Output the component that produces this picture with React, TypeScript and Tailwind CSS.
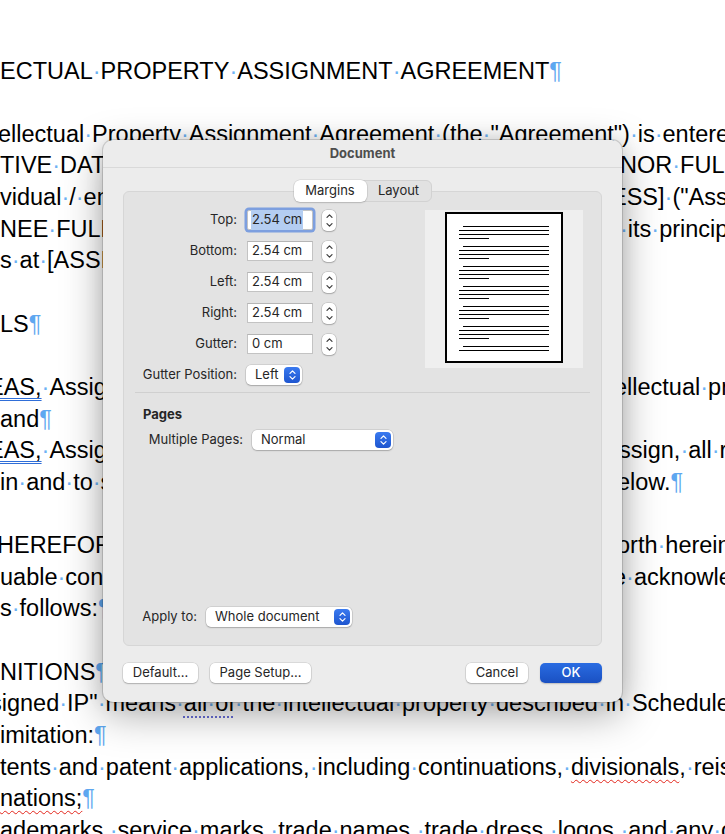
import React from "react";

// Document body: blue dots mark spaces, blue pilcrows mark paragraph ends
const Marked = ({ s }: { s: string }) => (
  <>
    {s.split(/( |¶)/).map((p, i) =>
      p === " " ? (
        <span key={i} className="text-[#6db2f4]">
          ·
        </span>
      ) : p === "¶" ? (
        <span key={i} className="text-[#5ea7f0]">
          ¶
        </span>
      ) : (
        p
      )
    )}
  </>
);

const m = (s: string) => <Marked s={s} />;

interface DocLine {
  left?: React.ReactNode;
  right?: React.ReactNode;
  lx?: string;
  rx?: string;
}

const lines: DocLine[] = [
  { left: m("ECTUAL PROPERTY ASSIGNMENT AGREEMENT¶") },
  {},
  {
    left: m('ellectual Property Assignment Agreement (the "Agreement") is entered into'),
    lx: "-ml-[2px]",
  },
  { left: m("TIVE DATE] by and between [ASSIGNOR FULL NAME], an"), right: m("NOR FULL NAME]"), rx: "-ml-[2px]" },
  { left: m("vidual / entity with an address at [ASSIGNOR ADDRESS]"), right: m('ESS] ("Assignor")'), rx: "-ml-[11px]" },
  { left: m("NEE FULL NAME], a company organized under the laws"), right: m(" its principal"), rx: "-ml-[2px]" },
  { left: m("s at [ASSIGNEE ADDRESS] (\"Assignee\").¶") },
  {},
  { left: m("LS¶") },
  {},
  {
    left: (
      <>
        <span className="underline decoration-double decoration-[#2f6ed8] decoration-1 underline-offset-[3px]">EAS,</span>
        {m(" Assignor is the owner of certain intellectual property;")}
      </>
    ),
    lx: "-ml-[12px]",
    right: m("ellectual property"),
    rx: "-ml-[8px]",
  },
  { left: m("and¶") },
  {
    left: (
      <>
        <span className="underline decoration-double decoration-[#2f6ed8] decoration-1 underline-offset-[3px]">EAS,</span>
        {m(" Assignor wishes to assign, and Assignee wishes to")}
      </>
    ),
    lx: "-ml-[12px]",
    right: m("ssign, all right"),
    rx: "-ml-[3px]",
  },
  { left: m("in and to such intellectual property as set forth below."), right: m("elow.¶"), rx: "-ml-[5px]" },
  {},
  {
    left: m("HEREFORE, in consideration of the mutual covenants set"),
    lx: "-ml-[3px]",
    right: m("orth herein and"),
    rx: "-ml-[5px]",
  },
  { left: m("uable consideration, the receipt of which is hereby"), right: m("e acknowledged"), rx: "-ml-[9px]" },
  { left: m("s follows:¶") },
  {},
  { left: m("NITIONS¶") },
  {
    left: (
      <>
        {m('signed IP" means ')}
        <span className="underline decoration-dotted decoration-[#6a70d8] decoration-2 underline-offset-[5px]">
          {m("all of")}
        </span>
        {m(" the intellectual property described in Schedule A")}
      </>
    ),
    lx: "-ml-[10px]",
  },
  { left: m("imitation:¶") },
  {
    left: (
      <>
        {m("tents and patent applications, including continuations, ")}
        <span className="underline decoration-wavy decoration-[#e3261c] decoration-1 underline-offset-[4px]">divisionals</span>
        {m(", reissues")}
      </>
    ),
  },
  {
    left: (
      <>
        <span className="underline decoration-wavy decoration-[#e3261c] decoration-1 underline-offset-[4px]">nations;</span>
        {m("¶")}
      </>
    ),
  },
  { left: m("ademarks, service marks, trade names, trade dress, logos, and any other") },
];

const Chevron = ({ up, color }: { up?: boolean; color: string }) => (
  <svg width="7" height="4" viewBox="0 0 7 4">
    <path
      d={up ? "M1 3.3 L3.5 0.8 L6 3.3" : "M1 0.7 L3.5 3.2 L6 0.7"}
      stroke={color}
      strokeWidth="1.2"
      fill="none"
      strokeLinecap="round"
      strokeLinejoin="round"
    />
  </svg>
);

const Stepper = () => (
  <div className="ml-[9px] flex h-[21px] w-[14px] flex-col items-center justify-between rounded-[5px] bg-white py-[4px] shadow-[0_0_0_0.5px_rgba(0,0,0,0.2),0_1px_1.5px_rgba(0,0,0,0.18)]">
    <Chevron up color="#3c3c3c" />
    <Chevron color="#3c3c3c" />
  </div>
);

const PopIcon = () => (
  <span className="flex h-[16px] w-[16px] flex-col items-center justify-center gap-[2px] rounded-[4px] bg-linear-to-b from-[#3a7af0] to-[#1e55cf]">
    <Chevron up color="#ffffff" />
    <Chevron color="#ffffff" />
  </span>
);

const Popup = ({ label, className }: { label: string; className: string }) => (
  <div
    className={`flex h-[20px] items-center justify-between rounded-[5px] bg-white pl-[9px] pr-[2px] shadow-[0_0_0_0.5px_rgba(0,0,0,0.16),0_1px_1.5px_rgba(0,0,0,0.2)] ${className}`}
  >
    <span>{label}</span>
    <PopIcon />
  </div>
);

const Field = ({ value, focused }: { value: string; focused?: boolean }) => (
  <div
    className={`ml-[10px] flex h-[20px] w-[66px] items-center border border-[#c3c3c3] bg-white pl-[3px] ${
      focused ? "rounded-[2px] border-[#8ba9de] ring-[2.5px] ring-[#7d9fdf]" : "border-t-[#b5b5b5]"
    }`}
  >
    <span className={focused ? "bg-[#b4cdf1] px-px" : "px-px"}>{value}</span>
  </div>
);

const marginRows = [
  { label: "Top:", value: "2.54 cm", focused: true },
  { label: "Bottom:", value: "2.54 cm" },
  { label: "Left:", value: "2.54 cm" },
  { label: "Right:", value: "2.54 cm" },
  { label: "Gutter:", value: "0 cm" },
];

// thumbnail of a page: groups of paragraph lines
const PagePreview = () => (
  <div className="mr-[18px] mt-[18px] flex h-[158px] w-[158px] justify-center bg-[#efefef] pt-[2px]">
    <div className="flex h-[151px] w-[118px] flex-col gap-[7px] border-2 border-black bg-white pl-[12px] pt-[12px]">
      {[0, 1, 2, 3, 4, 5, 6].map((g) => (
        <div key={g} className="flex flex-col gap-[3px]">
          <div className="ml-[4px] h-px w-[86px] bg-black" />
          <div className="h-px w-[90px] bg-black" />
          {g < 6 && (
            <>
              <div className="h-px w-[90px] bg-black" />
              <div className="h-px w-[30px] bg-black" />
            </>
          )}
        </div>
      ))}
    </div>
  </div>
);

const Button = ({ label, className }: { label: string; className: string }) => (
  <div
    className={`flex h-[20px] items-center justify-center rounded-[5px] bg-white text-[#262626] shadow-[0_0_0_0.5px_rgba(0,0,0,0.15),0_1px_1.5px_rgba(0,0,0,0.2)] ${className}`}
  >
    {label}
  </div>
);

const DocumentDialog = () => (
  <div className="absolute left-[103px] top-[140px] flex h-[562px] w-[519px] flex-col rounded-[10px] bg-[#ececec] font-['Inter',sans-serif] text-[13px] text-[#262626] shadow-[0_0_0_1px_rgba(0,0,0,0.14),0_12px_40px_rgba(0,0,0,0.34),0_0_18px_rgba(0,0,0,0.1)]">
    <div className="flex h-[28px] items-center justify-center border-b border-[#d9d9d9] text-[13px] font-bold text-[#4e4e4e]">
      Document
    </div>

    <div className="relative z-10 mt-[12px] flex h-[22px] self-center rounded-[6px] border border-[#d2d2d2] bg-[#e2e2e2]">
      <div className="-my-px -ml-px flex w-[73px] items-center justify-center rounded-[6px] bg-white shadow-[0_0_0_0.5px_rgba(0,0,0,0.12),0_1px_1.5px_rgba(0,0,0,0.15)]">
        Margins
      </div>
      <div className="flex w-[64px] items-center justify-center">Layout</div>
    </div>

    <div className="mx-[20px] -mt-[11px] flex h-[455px] flex-col rounded-[6px] border border-[#d6d6d6] bg-[#e3e3e3]">
      <div className="flex">
        <div className="flex flex-col gap-y-[11px] pt-[18px]">
          {marginRows.map((r) => (
            <div key={r.label} className="flex h-[20px] items-center">
              <span className="w-[113px] text-right">{r.label}</span>
              <Field value={r.value} focused={r.focused} />
              <Stepper />
            </div>
          ))}
          <div className="flex h-[20px] items-center">
            <span className="w-[113px] text-right">Gutter Position:</span>
            <Popup label="Left" className="ml-[9px] w-[56px]" />
          </div>
        </div>
        <div className="ml-auto">
          <PagePreview />
        </div>
      </div>

      <div className="mx-[11px] mt-[7px] h-px bg-[#d0d0d0]" />

      <div className="mt-[13px] pl-[19px] font-bold leading-[16px]">Pages</div>
      <div className="mt-[8px] flex h-[20px] items-center">
        <span className="w-[119px] text-right">Multiple Pages:</span>
        <Popup label="Normal" className="ml-[9px] w-[141px]" />
      </div>

      <div className="mb-[18px] mt-auto flex h-[20px] items-center">
        <span className="w-[73px] text-right">Apply to:</span>
        <Popup label="Whole document" className="ml-[9px] w-[146px]" />
      </div>
    </div>

    <div className="mt-[17px] flex items-center px-[20px]">
      <Button label="Default..." className="w-[75px]" />
      <Button label="Page Setup..." className="ml-[12px] w-[101px]" />
      <Button label="Cancel" className="ml-auto w-[62px]" />
      <div className="ml-[12px] flex h-[20px] w-[62px] items-center justify-center rounded-[5px] bg-linear-to-b from-[#2a6ce2] to-[#1a50c2] font-medium text-white shadow-[0_1px_1.5px_rgba(0,0,0,0.2)]">
        OK
      </div>
    </div>
  </div>
);

export default function App() {
  return (
    <div className="relative h-[834px] w-[725px] overflow-hidden bg-white">
      <div className="pt-[55.5px] font-['Liberation_Sans',Arial,sans-serif] text-[23.5px] text-black">
        {lines.map((ln, i) => (
          <div key={i} className="flex h-[31.65px] items-center whitespace-nowrap leading-[31.65px]">
            {ln.right ? (
              <>
                <div className="w-[622px] shrink-0 overflow-hidden">
                  <div className={ln.lx}>{ln.left}</div>
                </div>
                <div className={ln.rx}>{ln.right}</div>
              </>
            ) : (
              <div className={ln.lx}>{ln.left}</div>
            )}
          </div>
        ))}
      </div>
      <DocumentDialog />
    </div>
  );
}
